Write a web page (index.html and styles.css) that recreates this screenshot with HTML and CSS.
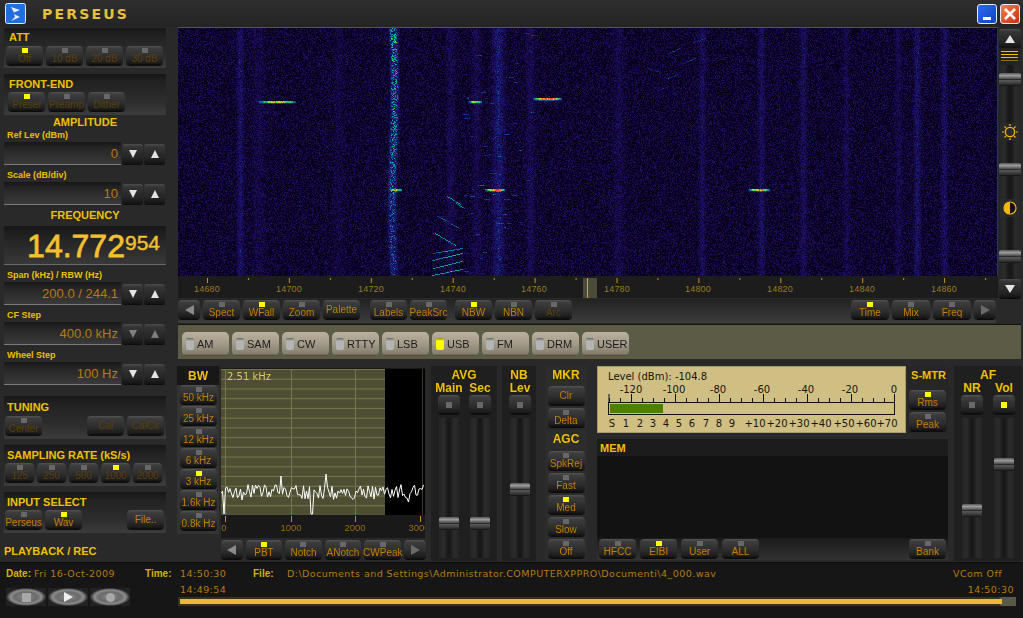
FILE: index.html
```html
<!DOCTYPE html>
<html lang="en">
<head>
    <meta charset="UTF-8">
    <meta name="viewport" content="width=device-width, initial-scale=1.0">
    <title>Perseus</title>
    <link rel="stylesheet" href="styles.css">
</head>
<body>
<div class="app">
    <header class="titlebar">
        <svg class="app-icon" width="21" height="21" viewBox="0 0 21 21">
            <rect x="0.5" y="0.5" width="20" height="20" rx="2" fill="#1f6fe0" stroke="#dfe8ff"/>
            <path d="M6 4 L15 7 L9 9.5 Z M9 11 L15 14 L6 18 L10 14 Z" fill="#e8f0ff"/>
        </svg>
        <span class="app-name">PERSEUS</span>
        <div class="win-buttons">
            <span class="win-btn win-min"><i></i></span>
            <span class="win-btn win-close">
                <svg width="20" height="20" viewBox="0 0 20 20"><path d="M5 5 L15 15 M15 5 L5 15" stroke="#fff" stroke-width="2.6"/></svg>
            </span>
        </div>
    </header>

    <div class="main">
        <aside class="side">
            <section class="panel panel-att">
                <h2>ATT</h2>
                <div class="btn-row">
                    <button class="btn off"><i class="led on"></i><span>Off</span></button>
                    <button class="btn off"><i class="led"></i><span>10 dB</span></button>
                    <button class="btn off"><i class="led"></i><span>20 dB</span></button>
                    <button class="btn off"><i class="led"></i><span>30 dB</span></button>
                </div>
            </section>
            <section class="panel panel-front">
                <h2>FRONT-END</h2>
                <div class="btn-row">
                    <button class="btn off"><i class="led on"></i><span>Presel</span></button>
                    <button class="btn off"><i class="led"></i><span>Preamp</span></button>
                    <button class="btn off"><i class="led"></i><span>Dither</span></button>
                </div>
            </section>

            <h3 class="group-title">AMPLITUDE</h3>
            <div class="field-block first">
                <label>Ref Lev (dBm)</label>
                <div class="field">
                    <div class="value">0</div>
                    <button class="spin"><i class="tri-down"></i></button>
                    <button class="spin"><i class="tri-up"></i></button>
                </div>
            </div>
            <div class="field-block">
                <label>Scale (dB/div)</label>
                <div class="field">
                    <div class="value">10</div>
                    <button class="spin"><i class="tri-down"></i></button>
                    <button class="spin"><i class="tri-up"></i></button>
                </div>
            </div>

            <h3 class="group-title freq-title">FREQUENCY</h3>
            <div class="freq">14.772<sup>954</sup></div>
            <div class="field-block span-block">
                <label>Span (kHz) / RBW (Hz)</label>
                <div class="field">
                    <div class="value">200.0 / 244.1</div>
                    <button class="spin"><i class="tri-down"></i></button>
                    <button class="spin"><i class="tri-up"></i></button>
                </div>
            </div>
            <div class="field-block">
                <label>CF Step</label>
                <div class="field">
                    <div class="value">400.0 kHz</div>
                    <button class="spin dim"><i class="tri-down"></i></button>
                    <button class="spin dim"><i class="tri-up"></i></button>
                </div>
            </div>
            <div class="field-block">
                <label>Wheel Step</label>
                <div class="field">
                    <div class="value">100 Hz</div>
                    <button class="spin"><i class="tri-down"></i></button>
                    <button class="spin"><i class="tri-up"></i></button>
                </div>
            </div>

            <section class="panel panel-tuning">
                <h2>TUNING</h2>
                <div class="btn-row">
                    <button class="btn off"><i class="led"></i><span>Center</span></button>
                    <button class="btn off plain push"><span>Cal</span></button>
                    <button class="btn off plain"><span>CalClr</span></button>
                </div>
            </section>
            <section class="panel panel-rate">
                <h2>SAMPLING RATE (kS/s)</h2>
                <div class="btn-row">
                    <button class="btn w29 off"><i class="led"></i><span>125</span></button>
                    <button class="btn w29 off"><i class="led"></i><span>250</span></button>
                    <button class="btn w29 off"><i class="led"></i><span>500</span></button>
                    <button class="btn w29 off"><i class="led on"></i><span>1000</span></button>
                    <button class="btn w29 off"><i class="led"></i><span>2000</span></button>
                </div>
            </section>
            <section class="panel panel-input">
                <h2>INPUT SELECT</h2>
                <div class="btn-row">
                    <button class="btn"><i class="led"></i><span>Perseus</span></button>
                    <button class="btn"><i class="led on"></i><span>Wav</span></button>
                    <button class="btn plain push"><span>File..</span></button>
                </div>
            </section>
            <h2 class="playback-title">PLAYBACK / REC</h2>
        </aside>

        <div class="center">
            <div class="top">
                <div class="spectrum">
                    <canvas id="waterfall" width="819" height="248"></canvas>
                    <svg class="ruler" width="819" height="22">
                        <defs>
                            <pattern id="rulerTicks" width="81.9" height="22" patternUnits="userSpaceOnUse" patternTransform="translate(29 0)">
                                <rect x="0" y="2" width="1" height="5" fill="#c89020"/>
                                <rect x="41" y="2" width="1" height="2" fill="#c89020"/>
                            </pattern>
                        </defs>
                        <rect width="819" height="22" fill="url(#rulerTicks)"/>
                        <rect x="405" y="2" width="14" height="20" fill="#4a4a38"/>
                        <rect x="409" y="2" width="1" height="20" fill="#e0a020"/>
                        <text x="29" y="16">14680</text>
                        <text x="111" y="16">14700</text>
                        <text x="193" y="16">14720</text>
                        <text x="275" y="16">14740</text>
                        <text x="356" y="16">14760</text>
                        <text x="439" y="16">14780</text>
                        <text x="520" y="16">14800</text>
                        <text x="602" y="16">14820</text>
                        <text x="684" y="16">14840</text>
                        <text x="766" y="16">14860</text>
                    </svg>
                </div>
                <div class="display-sliders">
                    <button class="spin tall"><i class="tri-up big"></i></button>
                    <div class="lines-icon"><i></i><i></i><i></i><i class="dim"></i></div>
                    <div class="track wide">
                        <div class="thumb" style="top: 8px"></div>
                        <svg class="track-icon" style="top: 58px" width="20" height="18" viewBox="0 0 20 18">
                            <circle cx="10" cy="9" r="4.6" fill="none" stroke="#f0b800" stroke-width="1.4"/>
                            <path d="M10 1 V3 M10 15 V17 M2 9 H4 M16 9 H18 M4.5 3.5 L6 5 M14 13 L15.5 14.5 M15.5 3.5 L14 5 M6 13 L4.5 14.5" stroke="#f0b800" stroke-width="1.2"/>
                        </svg>
                        <div class="thumb" style="top: 98px"></div>
                        <svg class="track-icon" style="top: 134px" width="20" height="18" viewBox="0 0 20 18">
                            <circle cx="10" cy="9" r="6" fill="#111" stroke="#f0b800" stroke-width="1.2"/>
                            <path d="M10 3 A6 6 0 0 0 10 15 Z" fill="#f0b800"/>
                        </svg>
                        <div class="thumb" style="top: 185px"></div>
                    </div>
                    <button class="spin tall"><i class="tri-down big"></i></button>
                </div>
            </div>

            <div class="toolbar">
                <button class="btn arrow"><i class="tri-left"></i></button>
                <button class="btn"><i class="led"></i><span>Spect</span></button>
                <button class="btn"><i class="led on"></i><span>WFall</span></button>
                <button class="btn"><i class="led"></i><span>Zoom</span></button>
                <button class="btn plain"><span>Palette</span></button>
                <button class="btn gap-l"><i class="led"></i><span>Labels</span></button>
                <button class="btn"><i class="led"></i><span>PeakSrc</span></button>
                <button class="btn gap-m"><i class="led on"></i><span>NBW</span></button>
                <button class="btn"><i class="led"></i><span>NBN</span></button>
                <button class="btn off"><i class="led"></i><span>Arc</span></button>
                <button class="btn w38 push"><i class="led on"></i><span>Time</span></button>
                <button class="btn w38"><i class="led"></i><span>Mix</span></button>
                <button class="btn w38"><i class="led"></i><span>Freq</span></button>
                <button class="btn arrow"><i class="tri-right"></i></button>
            </div>

            <div class="modebar">
                <button class="mode"><i></i>AM</button>
                <button class="mode"><i></i>SAM</button>
                <button class="mode"><i></i>CW</button>
                <button class="mode"><i></i>RTTY</button>
                <button class="mode"><i></i>LSB</button>
                <button class="mode"><i class="on"></i>USB</button>
                <button class="mode"><i></i>FM</button>
                <button class="mode"><i></i>DRM</button>
                <button class="mode"><i></i>USER</button>
            </div>

            <div class="lower">
                <section class="bw">
                    <h4>BW</h4>
                    <div class="bw-list">
                        <button class="btn"><i class="led"></i><span>50 kHz</span></button>
                        <button class="btn"><i class="led"></i><span>25 kHz</span></button>
                        <button class="btn"><i class="led"></i><span>12 kHz</span></button>
                        <button class="btn"><i class="led"></i><span>6 kHz</span></button>
                        <button class="btn"><i class="led on"></i><span>3 kHz</span></button>
                        <button class="btn"><i class="led"></i><span>1.6k Hz</span></button>
                        <button class="btn"><i class="led"></i><span>0.8k Hz</span></button>
                    </div>
                </section>

                <section class="scope">
                    <svg class="scope-plot" width="204" height="170">
                        <defs>
                            <pattern id="scopeGrid" width="204" height="9.73" patternUnits="userSpaceOnUse" patternTransform="translate(0 2)">
                                <rect x="0" y="8.7" width="204" height="1" fill="#77774c"/>
                            </pattern>
                            <pattern id="scopeTicks" width="6.45" height="8" patternUnits="userSpaceOnUse" patternTransform="translate(4 0)">
                                <rect x="0" y="0" width="1" height="3" fill="#c89020"/>
                            </pattern>
                        </defs>
                        <rect x="0" y="1" width="204" height="146" fill="#000"/>
                        <rect x="0" y="1" width="164" height="146" fill="#4e4e34"/>
                        <rect x="0" y="1" width="164" height="146" fill="url(#scopeGrid)"/>
                        <rect x="4" y="1" width="1" height="146" fill="#77774c"/>
                        <rect x="70" y="1" width="1" height="146" fill="#77774c"/>
                        <rect x="134" y="1" width="1" height="146" fill="#77774c"/>
                        <rect x="201" y="1" width="1" height="146" fill="#3a3a28"/>
                        <polyline id="trace" fill="none" stroke="#fff" stroke-width="1" points=""/>
                        <text class="scope-bw" x="6" y="12">2.51 kHz</text>
                        <rect x="0" y="148" width="204" height="3" fill="url(#scopeTicks)"/>
                        <rect x="4" y="148" width="1" height="6" fill="#c89020"/>
                        <rect x="70" y="148" width="1" height="6" fill="#c89020"/>
                        <rect x="134" y="148" width="1" height="6" fill="#c89020"/>
                        <rect x="199" y="148" width="1" height="6" fill="#c89020"/>
                        <text class="scope-axis" x="3" y="163">0</text>
                        <text class="scope-axis" x="70" y="163">1000</text>
                        <text class="scope-axis" x="134" y="163">2000</text>
                        <text class="scope-axis" x="198" y="163">3000</text>
                    </svg>
                    <div class="scope-buttons">
                        <button class="btn arrow"><i class="tri-left"></i></button>
                        <button class="btn"><i class="led on"></i><span>PBT</span></button>
                        <button class="btn"><i class="led"></i><span>Notch</span></button>
                        <button class="btn"><i class="led"></i><span>ANotch</span></button>
                        <button class="btn"><i class="led"></i><span>CWPeak</span></button>
                        <button class="btn arrow"><i class="tri-right"></i></button>
                    </div>
                </section>

                <section class="strip strip-avg">
                    <h4>AVG</h4>
                    <div class="channels">
                        <div class="channel">
                            <h5>Main</h5>
                            <button class="btn square"><i class="led"></i></button>
                            <div class="track"><div class="thumb" style="top: 99px"></div></div>
                        </div>
                        <div class="channel">
                            <h5>Sec</h5>
                            <button class="btn square"><i class="led"></i></button>
                            <div class="track"><div class="thumb" style="top: 99px"></div></div>
                        </div>
                    </div>
                </section>

                <section class="strip strip-nb">
                    <h4>NB</h4>
                    <div class="channels">
                        <div class="channel">
                            <h5>Lev</h5>
                            <button class="btn square"><i class="led"></i></button>
                            <div class="track"><div class="thumb" style="top: 65px"></div></div>
                        </div>
                    </div>
                </section>

                <div class="mkr-agc">
                    <section class="mkr">
                        <h4>MKR</h4>
                        <button class="btn plain"><span>Clr</span></button>
                        <button class="btn"><i class="led"></i><span>Delta</span></button>
                    </section>
                    <section class="agc">
                        <h4>AGC</h4>
                        <button class="btn"><i class="led"></i><span>SpkRej</span></button>
                        <button class="btn"><i class="led"></i><span>Fast</span></button>
                        <button class="btn"><i class="led on"></i><span>Med</span></button>
                        <button class="btn"><i class="led"></i><span>Slow</span></button>
                        <button class="btn"><i class="led"></i><span>Off</span></button>
                    </section>
                </div>

                <div class="meter-mem">
                    <div class="meter-row">
                        <svg class="meter" width="309" height="67">
                            <defs>
                                <pattern id="meterTicks" width="11" height="4" patternUnits="userSpaceOnUse" patternTransform="translate(12 32)">
                                    <rect x="0" y="0" width="1" height="4" fill="#111"/>
                                </pattern>
                            </defs>
                            <rect x="0.5" y="0.5" width="308" height="66" fill="#d0bf83" stroke="#a89a66"/>
                            <text x="11" y="14">Level (dBm): -104.8</text>
                            <g class="meter-top">
                                <text x="34" y="27">-120</text>
                                <text x="77" y="27">-100</text>
                                <text x="121" y="27">-80</text>
                                <text x="165" y="27">-60</text>
                                <text x="209" y="27">-40</text>
                                <text x="253" y="27">-20</text>
                                <text x="297" y="27">0</text>
                            </g>
                            <rect x="12" y="32" width="286" height="4" fill="url(#meterTicks)"/>
                            <path d="M12 28 V36 M34.5 28 V36 M78.5 28 V36 M122.5 28 V36 M166.5 28 V36 M210.5 28 V36 M254.5 28 V36 M297.5 28 V36" stroke="#111"/>
                            <rect x="11.5" y="36.5" width="286" height="12" fill="none" stroke="#111"/>
                            <rect x="13" y="38" width="53" height="9" fill="#4f7f00"/>
                            <g class="meter-bottom">
                                <text x="15" y="61">S</text>
                                <text x="29" y="61">1</text>
                                <text x="43" y="61">2</text>
                                <text x="56" y="61">3</text>
                                <text x="69" y="61">4</text>
                                <text x="82" y="61">5</text>
                                <text x="95" y="61">6</text>
                                <text x="109" y="61">7</text>
                                <text x="122" y="61">8</text>
                                <text x="135" y="61">9</text>
                                <text x="158" y="61">+10</text>
                                <text x="180" y="61">+20</text>
                                <text x="202" y="61">+30</text>
                                <text x="224" y="61">+40</text>
                                <text x="247" y="61">+50</text>
                                <text x="269" y="61">+60</text>
                                <text x="290" y="61">+70</text>
                            </g>
                        </svg>
                        <section class="smtr">
                            <h4>S-MTR</h4>
                            <button class="btn"><i class="led on"></i><span>Rms</span></button>
                            <button class="btn"><i class="led"></i><span>Peak</span></button>
                        </section>
                    </div>
                    <section class="mem">
                        <h4>MEM</h4>
                        <div class="mem-list"></div>
                        <div class="mem-buttons">
                            <button class="btn"><i class="led"></i><span>HFCC</span></button>
                            <button class="btn"><i class="led on"></i><span>EIBI</span></button>
                            <button class="btn"><i class="led"></i><span>User</span></button>
                            <button class="btn"><i class="led"></i><span>ALL</span></button>
                            <button class="btn push"><i class="led"></i><span>Bank</span></button>
                        </div>
                    </section>
                </div>

                <section class="strip strip-af">
                    <h4>AF</h4>
                    <div class="channels">
                        <div class="channel">
                            <h5>NR</h5>
                            <button class="btn square"><i class="led"></i></button>
                            <div class="track"><div class="thumb" style="top: 86px"></div></div>
                        </div>
                        <div class="channel">
                            <h5>Vol</h5>
                            <button class="btn square"><i class="led on"></i></button>
                            <div class="track"><div class="thumb" style="top: 40px"></div></div>
                        </div>
                    </div>
                </section>
            </div>
        </div>
    </div>

    <footer class="status">
        <div class="status-top">
            <b class="date-label">Date:</b><span class="date-value">Fri 16-Oct-2009</span>
            <b class="time-label">Time:</b><span class="time-value">14:50:30</span>
            <b class="file-label">File:</b><span class="file-path">D:\Documents and Settings\Administrator.COMPUTERXPPRO\Documenti\4_000.wav</span>
            <span class="vcom">VCom Off</span>
        </div>
        <div class="status-bottom">
            <div class="transport">
                <button class="eye"><i class="stop"></i></button>
                <button class="eye"><i class="play"></i></button>
                <button class="eye"><i class="rec"></i></button>
            </div>
            <div class="timeline">
                <div class="times"><span>14:49:54</span><span>14:50:30</span></div>
                <div class="progress"><div class="progress-fill"></div></div>
            </div>
        </div>
    </footer>
</div>
<script src="app.js"></script>
</body>
</html>
```

FILE: styles.css
```css
* {
    box-sizing: border-box;
}

html, body {
    margin: 0;
    padding: 0;
    background: #282828;
}

.app {
    width: 1023px;
    height: 618px;
    overflow: hidden;
    display: flex;
    flex-direction: column;
    font-family: "Liberation Sans", Arial, sans-serif;
    background: #292929;
    color: #c47f00;
}

h2, h3, h4, h5 {
    margin: 0;
    font-weight: bold;
    color: #f0c000;
}

/* Barre de titre */
.titlebar {
    height: 27px;
    display: flex;
    align-items: center;
    padding-left: 5px;
    background: linear-gradient(#2e2e2e, #242424);
}

.app-icon {
    display: block;
}

.app-name {
    margin-left: 16px;
    font-family: "DejaVu Sans", sans-serif;
    font-size: 14px;
    font-weight: bold;
    letter-spacing: 2.2px;
    color: #e6c03c;
}

.win-buttons {
    margin-left: auto;
    margin-right: 3px;
    display: flex;
    gap: 3px;
}

.win-btn {
    width: 20px;
    height: 20px;
    display: block;
    border: 1px solid #e8e8ff;
    border-radius: 3px;
    position: relative;
}

.win-btn svg {
    position: absolute;
    left: -1px;
    top: -1px;
}

.win-min {
    background: linear-gradient(135deg, #2a6cf0, #1140c0);
}

.win-min i {
    position: absolute;
    left: 5px;
    bottom: 3px;
    width: 8px;
    height: 3px;
    background: #fff;
}

.win-close {
    background: linear-gradient(135deg, #f08050, #c83010);
}

.main {
    height: 535px;
    display: flex;
}

/* Colonne gauche */
.side {
    width: 177px;
    padding-left: 4px;
    flex: none;
}

.panel {
    width: 162px;
    background: linear-gradient(#171717 0, #222 20%, #2e2e2e 70%, #3c3c3c 100%);
}

.panel h2 {
    font-size: 11px;
    line-height: 13px;
}

.panel-att {
    margin-top: 1px;
    height: 40px;
    padding: 3px 0 0 2px;
}

.panel-att h2 {
    padding-left: 3px;
    margin-bottom: 2px;
}

.panel-front {
    margin-top: 6px;
    height: 41px;
    padding: 4px 0 0 4px;
}

.panel-front h2 {
    padding-left: 1px;
    margin-bottom: 1px;
}

.panel-tuning {
    margin-top: 11px;
    height: 43px;
    padding: 5px 0 0 1px;
}

.panel-tuning h2 {
    padding-left: 2px;
    margin-bottom: 2px;
}

.panel-rate,
.panel-input {
    margin-top: 6px;
    height: 41px;
    padding: 4px 0 0 1px;
}

.panel-rate h2,
.panel-input h2 {
    padding-left: 2px;
    margin-bottom: 1px;
}

.btn-row {
    display: flex;
    gap: 3px;
    padding-right: 2px;
}

.btn-row .btn {
    flex: none;
}

.push {
    margin-left: auto;
}

.group-title {
    width: 162px;
    height: 15px;
    text-align: center;
    font-size: 11px;
    line-height: 15px;
}

.freq-title {
    margin-top: 3px;
    height: 14px;
}

.field-block {
    margin-top: 5px;
}

.field-block.first {
    margin-top: 0;
}

.field-block label {
    display: block;
    height: 12px;
    padding-left: 3px;
    font-size: 9px;
    font-weight: bold;
    line-height: 11px;
    color: #e8c000;
}

.field {
    display: flex;
    align-items: center;
    gap: 1px;
    height: 23px;
}

.value {
    width: 117px;
    height: 23px;
    padding-right: 3px;
    text-align: right;
    font-size: 13px;
    line-height: 24px;
    color: #b87a10;
    background: linear-gradient(#171717, #262626 30%, #3a3a3a);
    border-bottom: 1px solid #7a7a7a;
}

.spin {
    width: 21px;
    height: 20px;
    padding: 0;
    border: 0;
    border-radius: 3px;
    display: flex;
    align-items: center;
    justify-content: center;
    background: linear-gradient(#4c4c4c, #343434 15%, #252525 70%, #121212);
    box-shadow: 0 1px 0 #0c0c0c;
}

.spin.tall {
    width: 22px;
    height: 19px;
    flex: none;
}

.spin.dim i {
    opacity: 0.45;
}

.tri-down, .tri-up {
    display: block;
    width: 0;
    height: 0;
    border-left: 4.5px solid transparent;
    border-right: 4.5px solid transparent;
}

.tri-down {
    border-top: 8px solid #e4e4e4;
}

.tri-up {
    border-bottom: 8px solid #e4e4e4;
}

.tri-down.big, .tri-up.big {
    border-left-width: 5px;
    border-right-width: 5px;
}

.tri-left, .tri-right {
    display: block;
    width: 0;
    height: 0;
    border-top: 5px solid transparent;
    border-bottom: 5px solid transparent;
}

.tri-left {
    border-right: 9px solid #8a8a8a;
}

.tri-right {
    border-left: 9px solid #6a6a6a;
}

.freq {
    margin-top: 4px;
    width: 162px;
    height: 39px;
    padding-right: 6px;
    text-align: right;
    font-size: 32px;
    line-height: 41px;
    color: #f2c030;
    -webkit-text-stroke: 0.8px #f2c030;
    background: linear-gradient(#171717, #262626 40%, #383838);
    border-bottom: 1px solid #6a6a6a;
}

.freq sup {
    font-size: 21px;
    line-height: 0;
    vertical-align: 7px;
    -webkit-text-stroke: 0.4px #f2c030;
}

.playback-title {
    margin-top: 12px;
    font-size: 11px;
    line-height: 13px;
}

/* Boutons */
.btn {
    width: 37px;
    height: 19px;
    padding: 2px 0 0;
    border: 0;
    border-radius: 4px;
    display: flex;
    flex-direction: column;
    align-items: center;
    font-family: "Liberation Sans", Arial, sans-serif;
    font-size: 10px;
    color: #c47f00;
    background: linear-gradient(#555, #3d3d3d 12%, #2c2c2c 60%, #1b1b1b 90%, #0c0c0c);
    box-shadow: 0 1px 0 #0c0c0c;
    white-space: nowrap;
}

.btn span {
    line-height: 11px;
    margin-top: 0;
}

.btn.off {
    color: #5c3e0a;
}

.btn.plain {
    padding: 0;
    justify-content: center;
}

.btn.w29 {
    width: 29px;
}

.btn.w38 {
    width: 38px;
}

.btn.arrow {
    width: 22px;
    padding: 0;
    justify-content: center;
}

.btn.square {
    width: 22px;
    padding: 0;
    justify-content: center;
    flex: none;
}

.btn.square .led {
    width: 6px;
    height: 6px;
}

.led {
    display: block;
    width: 6px;
    height: 5px;
    flex: none;
    background: #686868;
}

.led.on {
    background: #ffff00;
}

/* Zone centrale */
.center {
    width: 846px;
    flex: none;
}

.top {
    height: 271px;
    display: flex;
}

.spectrum {
    margin-left: 1px;
    width: 820px;
    background: #1c1c1c;
}

#waterfall {
    display: block;
    border-right: 1px solid #2a2aa0;
    border-top: 1px solid #55554c;
    width: 820px;
    height: 249px;
}

.ruler {
    display: block;
}

.ruler text {
    font-size: 9px;
    text-anchor: middle;
    fill: #9a7a20;
    letter-spacing: 0.2px;
}

.display-sliders {
    width: 25px;
    padding: 2px 3px 0 1px;
    display: flex;
    flex-direction: column;
    height: 271px;
}

.lines-icon {
    height: 17px;
    flex: none;
    padding: 3px 2px 0;
    background: #222;
}

.lines-icon i {
    display: block;
    height: 1px;
    margin-bottom: 2px;
    background: #f0c000;
}

.lines-icon i.dim {
    background: #8a7010;
}

.track {
    position: relative;
    flex: 1;
    width: 20px;
    margin: 0 auto;
    background: linear-gradient(90deg, #242424 0, #2b2b2b 25%, #181818 45%, #181818 55%, #2b2b2b 75%, #242424 100%);
}

.track.wide {
    width: 22px;
}

.thumb {
    position: absolute;
    left: 0;
    right: 0;
    height: 13px;
    border-radius: 2px;
    background: linear-gradient(#585858 0, #9c9c9c 20%, #4a4a4a 45%, #1c1c1c 52%, #585858 58%, #333 85%, #111 100%);
}

.track-icon {
    position: absolute;
    left: 1px;
    background: #2a2a2a;
}

.toolbar {
    height: 24px;
    margin: 1px 0 0 1px;
    padding: 1px 0 0;
    width: 818px;
    display: flex;
    gap: 3px;
    background: linear-gradient(#222, #3c3c3c);
}

.gap-l {
    margin-left: 7px;
}

.gap-m {
    margin-left: 5px;
}

.modebar {
    margin: 1px 0 0 1px;
    width: 843px;
    height: 35px;
    padding: 7px 0 0 4px;
    display: flex;
    gap: 3px;
    background: #5c5c46;
    border-top: 1px solid #111;
}

.mode {
    width: 47px;
    height: 24px;
    padding: 0 0 0 4px;
    border: 0;
    border-radius: 5px;
    display: flex;
    align-items: center;
    gap: 3px;
    font-family: "Liberation Sans", Arial, sans-serif;
    font-size: 11px;
    color: #1c1c1c;
    background: linear-gradient(#bab29e, #a29a88 50%, #88806f 90%, #464438);
}

.mode i {
    display: block;
    width: 8px;
    height: 12px;
    flex: none;
    border-radius: 2px;
    background: linear-gradient(#666 0, #b4b4b4 25%);
}

.mode i.on {
    background: linear-gradient(#8a8a00 0, #ffff00 25%);
}

.lower {
    margin-top: 7px;
    height: 195px;
    display: flex;
}

.lower h4 {
    text-align: center;
    font-size: 12px;
    line-height: 14px;
}

.bw {
    width: 42px;
    height: 168px;
    background: #333;
}

.bw h4 {
    height: 19px;
    padding-top: 3px;
    background: #181818;
}

.bw-list {
    padding-left: 3px;
    display: flex;
    flex-direction: column;
    gap: 2px;
}

.scope {
    margin-left: 2px;
    width: 205px;
}

.scope-plot {
    display: block;
    margin-top: 2px;
    background: #191919;
}

.scope-bw {
    font-family: "DejaVu Sans", sans-serif;
    font-size: 10px;
    fill: #e0c860;
}

.scope-axis {
    font-size: 9.5px;
    text-anchor: middle;
    fill: #9a6c10;
}

.scope-buttons {
    margin-top: 2px;
    display: flex;
    gap: 3px;
}

.strip {
    background: #1f1f1f;
    padding-top: 2px;
}

.strip h5 {
    height: 13px;
    font-size: 12px;
    line-height: 13px;
    white-space: nowrap;
    text-align: center;
}

.channels {
    display: flex;
    height: 177px;
}

.channel {
    width: 22px;
    display: flex;
    flex-direction: column;
    align-items: center;
}

.channel .track {
    margin-top: 4px;
    margin-bottom: 1px;
    flex: 1;
}

.strip-avg {
    margin-left: 5px;
    width: 66px;
}

.strip-avg .channels {
    padding-left: 7px;
    gap: 9px;
}

.strip-nb {
    margin-left: 5px;
    width: 34px;
}

.strip-nb .channels {
    padding-left: 7px;
}

.mkr-agc {
    margin-left: 9px;
    width: 42px;
    display: flex;
    flex-direction: column;
    gap: 3px;
}

.mkr, .agc {
    display: flex;
    flex-direction: column;
    align-items: center;
    background: #2c2c2c;
}

.mkr {
    height: 61px;
    padding-top: 2px;
    gap: 3px;
}

.mkr h4 {
    height: 15px;
    margin-bottom: 0;
}

.agc {
    height: 130px;
    padding-top: 2px;
    gap: 3px;
}

.agc h4 {
    height: 15px;
    margin-bottom: 1px;
}

.meter-mem {
    margin-left: 10px;
    width: 351px;
}

.meter-row {
    display: flex;
    height: 73px;
}

.meter {
    display: block;
    font-family: "DejaVu Sans", sans-serif;
    font-size: 10px;
    fill: #161610;
}

.meter-top text, .meter-bottom text {
    text-anchor: middle;
}

.smtr {
    margin-left: 2px;
    width: 40px;
    height: 67px;
    padding: 2px 0 0 1px;
    background: #262626;
    display: flex;
    flex-direction: column;
    gap: 3px;
}

.smtr h4 {
    height: 19px;
    font-size: 11px;
}

.mem {
    height: 121px;
    display: flex;
    flex-direction: column;
    background: #121212;
}

.mem h4 {
    height: 17px;
    padding-left: 3px;
    text-align: left;
    font-size: 11px;
    line-height: 18px;
    background: #1c1c1c;
}

.mem-list {
    flex: 1;
}

.mem-buttons {
    height: 22px;
    padding: 1px 2px 0;
    display: flex;
    gap: 4px;
    background: linear-gradient(#1a1a1a, #333);
}

.strip-af {
    margin-left: 6px;
    width: 68px;
}

.strip-af .channels {
    padding-left: 7px;
    gap: 10px;
}

/* Barre du bas */
.status {
    height: 56px;
    flex: none;
    background: #161616;
    border-top: 1px solid #0c0c0c;
    font-family: "DejaVu Sans", sans-serif;
    font-size: 9.5px;
    letter-spacing: 0.46px;
    color: #b87a10;
}

.status-top {
    height: 20px;
    padding-top: 1px;
    display: flex;
    align-items: center;
}

.status-top b {
    font-family: "Liberation Sans", Arial, sans-serif;
    font-size: 10px;
    color: #d8b000;
    letter-spacing: 0;
}

.date-label {
    width: 34px;
    padding-left: 6px;
}

.date-value {
    width: 111px;
}

.time-label {
    width: 35px;
}

.time-value {
    width: 73px;
}

.file-label {
    width: 34px;
}

.file-path {
    width: 666px;
    white-space: nowrap;
}

.vcom {
    white-space: nowrap;
}

.status-bottom {
    display: flex;
    height: 34px;
}

.transport {
    width: 178px;
    padding: 5px 0 0 6px;
    display: flex;
    gap: 2px;
}

.eye {
    width: 40px;
    height: 18px;
    padding: 0;
    border: 0;
    display: flex;
    align-items: center;
    justify-content: center;
    background: radial-gradient(ellipse closest-side at center, #8a8a8a 0, #6a6a6a 55%, #8c8c8c 78%, #4a4a4a 92%, #222 100%);
}

.stop {
    width: 9px;
    height: 9px;
    background: #a8a8a8;
}

.play {
    width: 0;
    height: 0;
    border-top: 5px solid transparent;
    border-bottom: 5px solid transparent;
    border-left: 9px solid #eee;
}

.rec {
    width: 9px;
    height: 9px;
    border-radius: 50%;
    background: #a8a8a8;
}

.timeline {
    width: 838px;
}

.times {
    height: 14px;
    padding: 0 2px;
    display: flex;
    justify-content: space-between;
    line-height: 14px;
}

.progress {
    height: 9px;
    padding: 2px 14px 2px 2px;
    background: linear-gradient(90deg, #33331f 0, #33331f 98%, #5a5a48 98.2%, #5a5a48 100%);
}

.progress-fill {
    height: 5px;
    background: #e8b838;
}
```

FILE: app.js
```js
// Petit generateur pseudo-aleatoire pour garder toujours la meme image
function makeRandom(seed) {
    return function () {
        seed |= 0;
        seed = seed + 0x6D2B79F5 | 0;
        let t = Math.imul(seed ^ seed >>> 15, 1 | seed);
        t = t + Math.imul(t ^ t >>> 7, 61 | t) ^ t;
        return ((t ^ t >>> 14) >>> 0) / 4294967296;
    };
}

const colorStops = [
    [0.00, 2, 0, 14],
    [0.10, 28, 10, 84],
    [0.25, 22, 26, 122],
    [0.40, 16, 80, 154],
    [0.55, 16, 160, 160],
    [0.70, 32, 208, 96],
    [0.85, 224, 224, 32],
    [1.00, 240, 64, 16]
];

function colorAt(v) {
    v = Math.min(1, Math.max(0, v));
    for (let i = 1; i < colorStops.length; i++) {
        const a = colorStops[i - 1];
        const b = colorStops[i];
        if (v <= b[0]) {
            const t = (v - a[0]) / (b[0] - a[0]);
            return [a[1] + (b[1] - a[1]) * t, a[2] + (b[2] - a[2]) * t, a[3] + (b[3] - a[3]) * t];
        }
    }
    return colorStops[colorStops.length - 1].slice(1);
}

function drawWaterfall() {
    const canvas = document.getElementById('waterfall');
    const ctx = canvas.getContext('2d');
    const w = canvas.width;
    const h = canvas.height;
    const rand = makeRandom(1977);
    const field = new Float32Array(w * h);

    // Bruit de fond
    for (let i = 0; i < field.length; i++) {
        field[i] = 0.058 * -Math.log(1 - rand() * 0.98);
    }

    // Bandes verticales faibles: [x, largeur, force]
    const bands = [
        [62, 3, 0.14], [80, 6, 0.05], [160, 5, 0.04], [272, 4, 0.07],
        [320, 5, 0.2], [298, 4, 0.07], [352, 4, 0.08], [440, 5, 0.06], [524, 3, 0.1],
        [583, 3, 0.12], [625, 3, 0.11], [668, 3, 0.07], [720, 3, 0.07], [739, 3, 0.15], [766, 3, 0.12]
    ];
    bands.forEach(b => {
        for (let y = 0; y < h; y++) {
            for (let x = Math.max(0, b[0] - b[1] * 3); x < Math.min(w, b[0] + b[1] * 3); x++) {
                const d = (x - b[0]) / b[1];
                field[y * w + x] += b[2] * Math.exp(-d * d) * rand() * 1.4;
            }
        }
    });

    // Signal fort autour de 14722
    for (let y = 0; y < h; y++) {
        const cx = 215 + Math.sin(y / 37) * 1.2;
        const strength = 0.78 - 0.38 * (y / h);
        for (let x = 205; x < 226; x++) {
            const d = (x - cx) / 4;
            const p = Math.exp(-d * d * d * d);
            field[y * w + x] += p * strength * (0.15 + rand() * 0.8) * (rand() < 0.72 ? 1 : 0.2);
        }
    }

    // Petits traits horizontaux
    for (let i = 0; i < 45; i++) {
        const x = 285 + Math.floor(rand() * 70);
        const y = Math.floor(rand() * h);
        const len = 2 + Math.floor(rand() * 6);
        for (let k = 0; k < len; k++) {
            if (x + k < w) field[y * w + x + k] += 0.2 + rand() * 0.12;
        }
    }

    // Porteuses: [x0, x1, y, force]
    const carriers = [
        [80, 118, 73, 0.95], [290, 304, 73, 0.85], [355, 384, 70, 1.05],
        [212, 224, 161, 0.8], [307, 327, 161, 1.05], [570, 592, 161, 0.95]
    ];
    carriers.forEach(c => {
        const mid = (c[0] + c[1]) / 2;
        const half = (c[1] - c[0]) / 2;
        for (let x = c[0]; x < c[1]; x++) {
            const d = Math.abs(x - mid) / half;
            const v = c[3] * (1 - d * d * 0.7) * (0.75 + rand() * 0.3);
            field[c[2] * w + x] += v;
            field[(c[2] + 1) * w + x] += v * 0.9;
            field[(c[2] + 2) * w + x] += v * 0.35;
        }
    });

    // Traits en diagonale: [x0, y0, x1, y1, force]
    const sweeps = [
        [269, 168, 282, 176, 0.42], [278, 175, 286, 180, 0.38], [259, 188, 270, 193, 0.32],
        [272, 195, 280, 199, 0.38], [257, 205, 277, 217, 0.45], [255, 225, 284, 220, 0.42],
        [254, 232, 284, 225, 0.48], [255, 240, 284, 233, 0.48], [254, 247, 284, 241, 0.48],
        [490, 25, 502, 20, 0.22], [505, 35, 517, 30, 0.22], [490, 50, 500, 46, 0.22],
        [470, 40, 482, 44, 0.18], [515, 14, 527, 10, 0.2], [480, 62, 490, 58, 0.18]
    ];
    sweeps.forEach(s => {
        const n = Math.abs(s[2] - s[0]);
        for (let k = 0; k <= n; k++) {
            const x = Math.round(s[0] + (s[2] - s[0]) * k / n);
            const y = Math.round(s[1] + (s[3] - s[1]) * k / n);
            if (y >= 0 && y < h) field[y * w + x] += s[4] * (0.7 + rand() * 0.5);
        }
    });

    const img = ctx.createImageData(w, h);
    for (let i = 0; i < field.length; i++) {
        const c = colorAt(field[i]);
        img.data[i * 4] = c[0];
        img.data[i * 4 + 1] = c[1];
        img.data[i * 4 + 2] = c[2];
        img.data[i * 4 + 3] = 255;
    }
    ctx.putImageData(img, 0, 0);
}

function drawTrace() {
    const rand = makeRandom(42);
    const dips = { 2: 146, 3: 120, 14: 132, 60: 146, 61: 146, 86: 128, 87: 130, 125: 134, 148: 126, 168: 132, 174: 136 };
    const peaks = { 40: 108, 70: 106, 138: 106, 172: 102, 180: 112 };
    const points = [];
    for (let x = 0; x < 204; x += 1.5) {
        const idx = Math.round(x / 1.5);
        let y = 124 + (rand() - 0.5) * 15;
        if (dips[idx]) y = dips[idx];
        if (peaks[idx]) y = peaks[idx];
        points.push(x.toFixed(1) + ',' + y.toFixed(1));
    }
    document.getElementById('trace').setAttribute('points', points.join(' '));
}

drawWaterfall();
drawTrace();
```
